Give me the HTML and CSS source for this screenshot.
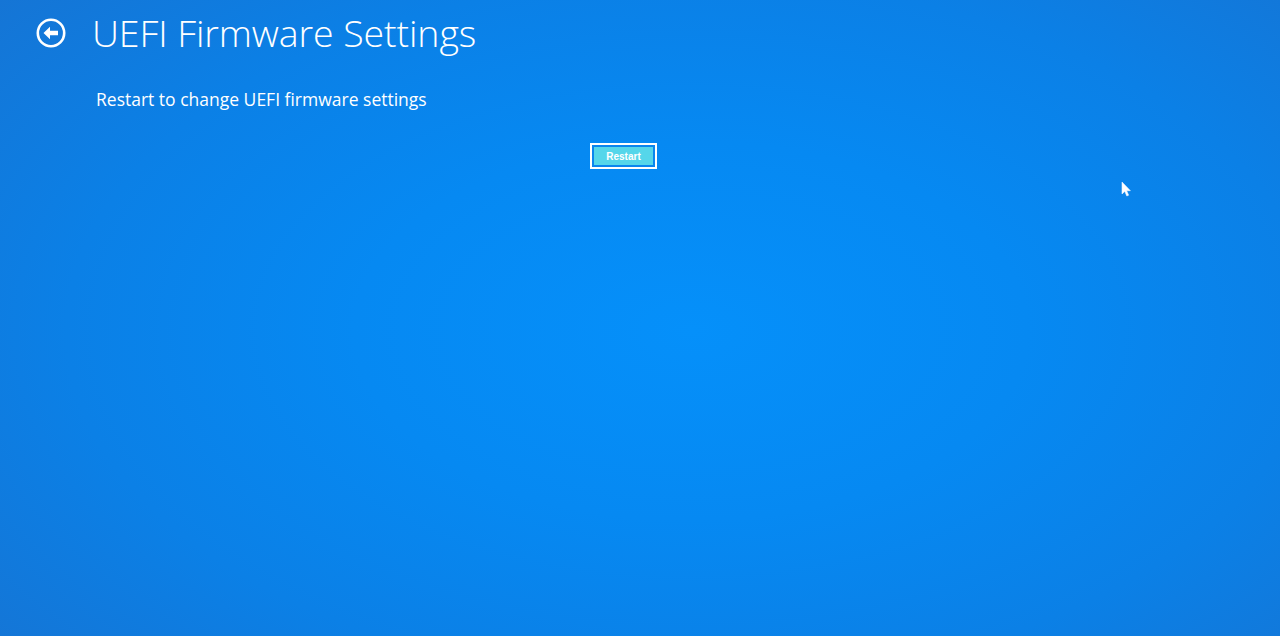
FILE: index.html
```html
<!DOCTYPE html>
<html lang="en">
<head>
<meta charset="utf-8">
<title>UEFI Firmware Settings</title>
<link rel="stylesheet" href="styles.css">
</head>
<body>
<main class="screen">
  <header class="header">
    <svg class="back" viewBox="0 0 30 30" width="30" height="30" aria-label="Back">
      <circle cx="15" cy="15" r="13.2" fill="none" stroke="#fff" stroke-width="2.6"/>
      <path d="M7.5 15 L14 8.8 L14 12.8 L22 12.8 L22 17.2 L14 17.2 L14 21.2 Z" fill="#fff"/>
    </svg>
    <h1 class="title">UEFI Firmware Settings</h1>
  </header>
  <section class="content">
    <p class="desc">Restart to change UEFI firmware settings</p>
    <div class="actions">
      <button class="restart">Restart</button>
    </div>
  </section>
  <svg class="cursor" viewBox="0 0 10 16" width="10" height="16">
    <path d="M1 1 L1 13 L3.8 10.4 L5.8 15 L7.6 14.2 L5.7 9.7 L9.4 9.7 Z" fill="#fff" stroke="#e8f2ff" stroke-width="0.6"/>
  </svg>
</main>
</body>
</html>
```
FILE: styles.css
```css
html, body {
  margin: 0;
  padding: 0;
  width: 1280px;
  height: 636px;
  overflow: hidden;
}
.screen {
  position: relative;
  width: 1280px;
  height: 636px;
  background: radial-gradient(ellipse 75% 85% at 54% 52%, #0590fa 0%, #0689f2 35%, #0b80e6 65%, #1773d2 100%);
  font-family: "Open Sans", "Noto Sans", sans-serif;
  color: #fff;
  box-sizing: border-box;
  padding: 12px 0 0 36px;
}
.header {
  display: flex;
  align-items: center;
  gap: 26px;
  height: 42px;
}
.back {
  display: block;
  flex: none;
}
.title {
  margin: 0;
  font-weight: 300;
  font-size: 37.5px;
  line-height: 42px;
  letter-spacing: -0.1px;
}
.content {
  padding-left: 60px;
  margin-top: 33px;
}
.desc {
  margin: 0;
  font-size: 17.5px;
  line-height: 24px;
  letter-spacing: 0;
}
.actions {
  margin-top: 32px;
  padding-left: 494px;
}
.restart {
  display: block;
  width: 67px;
  height: 26px;
  box-sizing: border-box;
  border: 2px solid #fff;
  background: #55d6ea;
  box-shadow: inset 0 0 0 2px #0a86ee;
  color: #fff;
  font-family: "Liberation Sans", Arial, sans-serif;
  font-weight: bold;
  font-size: 10px;
  padding: 0;
  margin: 0;
}
.cursor {
  position: absolute;
  left: 1121px;
  top: 181px;
}
```
